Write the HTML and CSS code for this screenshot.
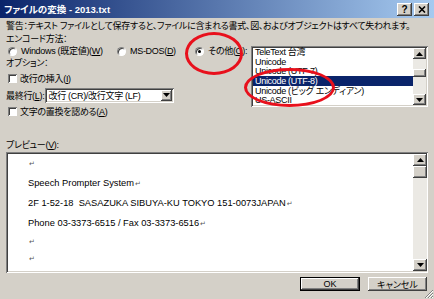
FILE: index.html
```html
<!DOCTYPE html>
<html lang="ja">
<head>
  <meta charset="UTF-8" />
  <title>ファイルの変換 - 2013.txt</title>
  <link rel="stylesheet" href="styles.css">
</head>
<body>

  <div class="dialog">

    <!-- Title bar -->
    <div class="titlebar">
      <span class="title">ファイルの変換 - 2013.txt</span>
      <div class="tbtns">
        <span class="tbtn help">?</span>
        <span class="tbtn">
          <svg width="8" height="7" viewBox="0 0 8 7"><path d="M1 0.5 L7 6.5 M7 0.5 L1 6.5" stroke="#000" stroke-width="1.6" /></svg>
        </span>
      </div>
    </div>

    <div class="main">
      <p class="warn">警告：テキスト ファイルとして保存すると、ファイルに含まれる書式、図、およびオブジェクトはすべて失われます。</p>

      <!-- Encoding -->
      <div class="enc">
        <div class="enc-left">
          <div class="row r-enc">エンコード方法：</div>
          <div class="row radios">
            <label class="radio"><span class="rb"></span><span>Windows (既定値)(<u>W</u>)</span></label>
            <label class="radio"><span class="rb"></span><span>MS-DOS(<u>D</u>)</span></label>
            <label class="radio"><span class="rb on"></span><span>その他(<u>O</u>):</span></label>
          </div>
          <div class="row r-opt">オプション：</div>
          <div class="row check c1"><span class="cb"></span><span>改行の挿入(<u>I</u>)</span></div>
          <div class="row sel-row">
            <span>最終行(<u>L</u>):</span>
            <div class="select">
              <span class="sel-text">改行 (CR)/改行文字 (LF)</span>
              <span class="sbtn"><svg width="7" height="4" viewBox="0 0 7 4"><path d="M0 0 H7 L3.5 4 Z" fill="#000" /></svg></span>
            </div>
          </div>
          <div class="row check c2"><span class="cb"></span><span>文字の置換を認める(<u>A</u>)</span></div>
        </div>

        <div class="listbox">
          <ul class="items">
            <li>TeleText 台湾</li>
            <li>Unicode</li>
            <li>Unicode (UTF-7)</li>
            <li class="selected">Unicode (UTF-8)</li>
            <li>Unicode (ビッグ エンディアン)</li>
            <li>US-ASCII</li>
          </ul>
          <div class="vscroll small">
            <span class="arrow"><svg width="7" height="4" viewBox="0 0 7 4"><path d="M0 4 H7 L3.5 0 Z" fill="#000" /></svg></span>
            <div class="track"><span class="thumb"></span></div>
            <span class="arrow"><svg width="7" height="4" viewBox="0 0 7 4"><path d="M0 0 H7 L3.5 4 Z" fill="#000" /></svg></span>
          </div>
        </div>
      </div>

      <!-- Preview -->
      <div class="prev-label">プレビュー(<u>V</u>):</div>
      <div class="preview">
        <div class="ptext">
          <div class="pl l1"><span class="ret">↵</span></div>
          <div class="pl l2"><span>Speech Prompter System</span><span class="ret">↵</span></div>
          <div class="pl l3"><span>2F 1-52-18&nbsp; SASAZUKA SIBUYA-KU TOKYO 151-0073JAPAN</span><span class="ret">↵</span></div>
          <div class="pl l4"><span>Phone 03-3373-6515 / Fax 03-3373-6516</span><span class="ret">↵</span></div>
          <div class="pl l5"><span class="ret">↵</span></div>
          <div class="pl l6"><span class="ret">↵</span></div>
        </div>
        <div class="vscroll big">
          <span class="arrow"><svg width="7" height="4" viewBox="0 0 7 4"><path d="M0 4 H7 L3.5 0 Z" fill="#000" /></svg></span>
          <div class="track"><span class="thumb"></span></div>
          <span class="arrow"><svg width="7" height="4" viewBox="0 0 7 4"><path d="M0 0 H7 L3.5 4 Z" fill="#000" /></svg></span>
        </div>
      </div>

      <div class="buttons">
        <button class="btn default">OK</button>
        <button class="btn">キャンセル</button>
      </div>
    </div>

    <!-- red marks drawn over the dialog -->
    <div class="mark m1"></div>
    <div class="mark m2"></div>

    <svg class="grip" width="11" height="11" viewBox="0 0 11 11">
      <path d="M10 2 L2 10 M10 5 L5 10 M10 8 L8 10" stroke="#808080" stroke-width="1" />
      <path d="M10 3 L3 10 M10 6 L6 10 M10 9 L9 10" stroke="#fff" stroke-width="1" />
    </svg>

  </div>

</body>
</html>
```

FILE: styles.css
```css
* { box-sizing: border-box; }
body {
  margin: 0;
  background: #d4d0c8;
}
.dialog {
  position: relative;
  width: 434px;
  height: 299px;
  overflow: hidden;
  background: #d4d0c8;
  color: #000;
  font-family: "Liberation Sans", "Noto Sans CJK JP", sans-serif;
  font-size: 9px;
  letter-spacing: -0.3px;
  font-feature-settings: "palt";
}
u { text-decoration: underline; text-underline-offset: 1px; }

/* title bar */
.titlebar {
  height: 18px;
  display: flex;
  align-items: center;
  justify-content: space-between;
  padding: 0 5px 0 4px;
  background: linear-gradient(to right, #0a246a, #a6caf0);
}
.title {
  color: #fff;
  font-weight: bold;
  font-size: 9.5px;
  letter-spacing: 0;
}
.tbtns { display: flex; gap: 2px; }
.tbtn {
  width: 15px;
  height: 13px;
  display: flex;
  align-items: center;
  justify-content: center;
  background: #d4d0c8;
  box-shadow: inset -1px -1px #404040, inset 1px 1px #fff, inset -2px -2px #808080;
}
.help {
  font-weight: bold;
  font-size: 10px;
}

.main { padding: 2px 6px 0 6px; }
.warn {
  margin: 0;
  height: 13px;
  line-height: 13px;
  white-space: nowrap;
}

/* encoding area */
.enc { display: flex; }
.enc-left { width: 245px; }
.row { white-space: nowrap; }
.r-enc { height: 13px; line-height: 13px; }
.radios {
  height: 11px;
  line-height: 11px;
  display: grid;
  grid-template-columns: 109px 78px auto;
  padding-left: 2px;
}
.radio { display: flex; align-items: center; gap: 4px; }
.rb {
  position: relative;
  width: 9px;
  height: 9px;
  border-radius: 50%;
  background: #fff;
  border: 1px solid;
  border-color: #808080 #fff #fff #808080;
  box-shadow: inset 1px 1px #404040;
}
.rb.on::after {
  content: "";
  position: absolute;
  left: 2px;
  top: 2px;
  width: 3px;
  height: 3px;
  border-radius: 50%;
  background: #000;
}
.r-opt { height: 13px; line-height: 13px; }
.check {
  display: flex;
  align-items: center;
  gap: 3px;
  padding-left: 2px;
}
.c1 { height: 16px; }
.c2 { height: 14px; }
.cb {
  width: 9px;
  height: 9px;
  background: #fff;
  box-shadow: inset 1px 1px #808080, inset -1px -1px #fff, inset 2px 2px #404040;
}
.sel-row {
  height: 18px;
  display: flex;
  align-items: center;
  gap: 1px;
}
.select {
  width: 129px;
  height: 15px;
  display: flex;
  align-items: center;
  justify-content: space-between;
  padding: 0 2px 0 3px;
  background: #fff;
  box-shadow: inset 1px 1px #808080, inset -1px -1px #fff, inset 2px 2px #404040, inset -2px -2px #d4d0c8;
}
.sbtn {
  width: 11px;
  height: 11px;
  display: flex;
  align-items: center;
  justify-content: center;
  background: #d4d0c8;
  box-shadow: inset -1px -1px #404040, inset 1px 1px #fff, inset -2px -2px #808080;
}

/* list box */
.listbox {
  margin-top: 13px;
  width: 177px;
  height: 61px;
  display: flex;
  padding: 1px 2px 2px 2px;
  background: #fff;
  box-shadow: inset 1px 1px #808080, inset -1px -1px #fff, inset 2px 2px #404040, inset -2px -2px #d4d0c8;
}
.items {
  flex: 1;
  list-style: none;
  margin: 0;
  padding: 0;
  overflow: hidden;
}
.items li {
  height: 9.7px;
  line-height: 10px;
  padding-left: 2px;
  white-space: nowrap;
}
.items li.selected { background: #0a246a; color: #fff; }

/* scroll bars */
.vscroll {
  width: 13px;
  display: flex;
  flex-direction: column;
}
.small { margin-top: 1px; }
.vscroll .arrow, .thumb {
  display: flex;
  align-items: center;
  justify-content: center;
  background: #d4d0c8;
  box-shadow: inset -1px -1px #404040, inset 1px 1px #fff, inset -2px -2px #808080;
}
.vscroll .track { flex: 1; background: #ebe9e4; }
.thumb { display: block; }
.small .arrow { height: 11px; }
.small .thumb { height: 8px; margin-top: 10px; }
.big { width: 14px; }
.big .arrow { height: 12px; }
.big .thumb { height: 12px; }

/* preview */
.prev-label {
  margin-top: 21px;
  height: 12px;
  line-height: 12px;
}
.preview {
  margin-top: 1px;
  height: 121px;
  display: flex;
  padding: 2px 1px 2px 2px;
  background: #fff;
  box-shadow: inset 1px 1px #808080, inset -1px -1px #fff, inset 2px 2px #404040, inset -2px -2px #d4d0c8;
}
.ptext {
  flex: 1;
  padding-left: 20px;
  font-size: 9.3px;
  letter-spacing: 0;
}
.pl { white-space: nowrap; display: flex; align-items: center; }
.l1 { height: 18px; }
.l2 { height: 21px; }
.l3 { height: 20px; }
.l4 { height: 19px; }
.l5, .l6 { height: 17px; }
.ret {
  font-family: "DejaVu Sans", sans-serif;
  font-size: 7px;
  color: #555;
  margin-left: 1px;
  position: relative;
  top: 1px;
}

/* buttons */
.buttons {
  margin-top: 4px;
  display: flex;
  justify-content: flex-end;
  gap: 8px;
  padding-right: 1px;
}
.btn {
  width: 59px;
  height: 14px;
  padding: 0;
  border: none;
  font: inherit;
  letter-spacing: 0;
  color: #000;
  background: #d4d0c8;
  box-shadow: inset -1px -1px #404040, inset 1px 1px #fff, inset -2px -2px #808080;
}
.btn.default {
  width: 60px;
  border: 1px solid #000;
}

/* red hand-drawn marks */
.mark {
  position: absolute;
  border: 3px solid #e8101c;
  border-radius: 50%;
}
.m1 { left: 185px; top: 32px; width: 58px; height: 43px; }
.m2 { left: 244px; top: 68px; width: 91px; height: 39px; }

.grip {
  position: absolute;
  right: 0;
  bottom: 0;
}
```
